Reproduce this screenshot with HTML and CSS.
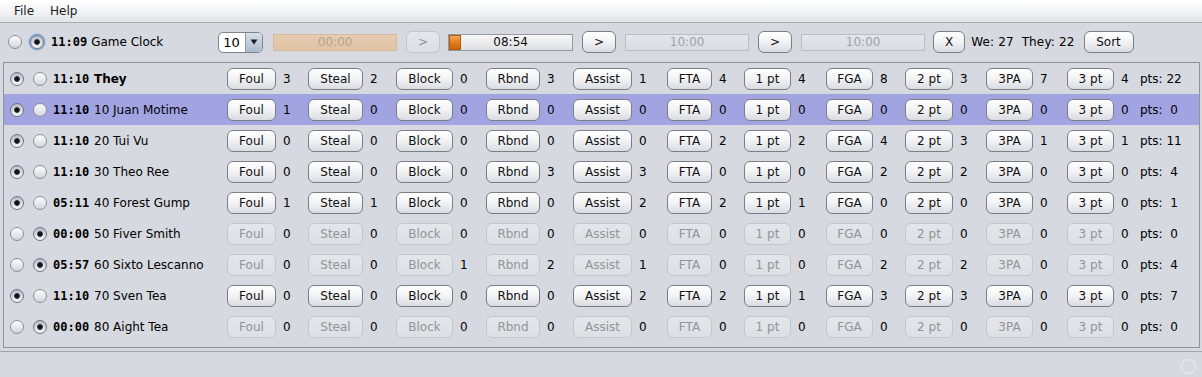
FILE: index.html
```html
<!DOCTYPE html>
<html>
<head>
<meta charset="utf-8">
<title>Game Clock</title>
<link rel="stylesheet" href="styles.css">
</head>
<body>
<div class="menubar"><span class="menu">File</span><span class="menu">Help</span></div>

<div class="toprow">
  <span class="radio r1"></span>
  <span class="radio on focus r2"></span>
  <span class="time t1">11:09</span>
  <span class="label">Game Clock</span>
  <div class="combo"><span class="combo-val">10</span><span class="combo-arrow"><svg width="8" height="6" viewBox="0 0 8 6"><path d="M0.5 0.5 L7.5 0.5 L4 5.5 Z" fill="#1a1d22"/></svg></span></div>
  <div class="pbar tan"><span>00:00</span></div>
  <button class="btn small dis">&gt;</button>
  <div class="pbar live"><i class="chunk"></i><span>08:54</span></div>
  <button class="btn small">&gt;</button>
  <div class="pbar off"><span>10:00</span></div>
  <button class="btn small">&gt;</button>
  <div class="pbar off"><span>10:00</span></div>
  <button class="btn x">X</button>
  <span class="score">We: 27  They: 22</span>
  <button class="btn sort">Sort</button>
</div>

<div class="panel">
  <div class="row">
    <span class="radio on"></span><span class="radio"></span>
    <span class="time">11:10</span><span class="name bold">They</span>
    <button class="btn">Foul</button><span class="cnt">3</span>
    <button class="btn">Steal</button><span class="cnt">2</span>
    <button class="btn">Block</button><span class="cnt">0</span>
    <button class="btn">Rbnd</button><span class="cnt">3</span>
    <button class="btn">Assist</button><span class="cnt">1</span>
    <button class="btn">FTA</button><span class="cnt">4</span>
    <button class="btn">1 pt</button><span class="cnt">4</span>
    <button class="btn">FGA</button><span class="cnt">8</span>
    <button class="btn">2 pt</button><span class="cnt">3</span>
    <button class="btn">3PA</button><span class="cnt">7</span>
    <button class="btn">3 pt</button><span class="cnt">4</span>
    <span class="pts">pts: 22</span>
  </div>
  <div class="row sel">
    <span class="radio on"></span><span class="radio"></span>
    <span class="time">11:10</span><span class="name">10 Juan Motime</span>
    <button class="btn">Foul</button><span class="cnt">1</span>
    <button class="btn">Steal</button><span class="cnt">0</span>
    <button class="btn">Block</button><span class="cnt">0</span>
    <button class="btn">Rbnd</button><span class="cnt">0</span>
    <button class="btn">Assist</button><span class="cnt">0</span>
    <button class="btn">FTA</button><span class="cnt">0</span>
    <button class="btn">1 pt</button><span class="cnt">0</span>
    <button class="btn">FGA</button><span class="cnt">0</span>
    <button class="btn">2 pt</button><span class="cnt">0</span>
    <button class="btn">3PA</button><span class="cnt">0</span>
    <button class="btn">3 pt</button><span class="cnt">0</span>
    <span class="pts">pts:  0</span>
  </div>
  <div class="row">
    <span class="radio on"></span><span class="radio"></span>
    <span class="time">11:10</span><span class="name">20 Tui Vu</span>
    <button class="btn">Foul</button><span class="cnt">0</span>
    <button class="btn">Steal</button><span class="cnt">0</span>
    <button class="btn">Block</button><span class="cnt">0</span>
    <button class="btn">Rbnd</button><span class="cnt">0</span>
    <button class="btn">Assist</button><span class="cnt">0</span>
    <button class="btn">FTA</button><span class="cnt">2</span>
    <button class="btn">1 pt</button><span class="cnt">2</span>
    <button class="btn">FGA</button><span class="cnt">4</span>
    <button class="btn">2 pt</button><span class="cnt">3</span>
    <button class="btn">3PA</button><span class="cnt">1</span>
    <button class="btn">3 pt</button><span class="cnt">1</span>
    <span class="pts">pts: 11</span>
  </div>
  <div class="row">
    <span class="radio on"></span><span class="radio"></span>
    <span class="time">11:10</span><span class="name">30 Theo Ree</span>
    <button class="btn">Foul</button><span class="cnt">0</span>
    <button class="btn">Steal</button><span class="cnt">0</span>
    <button class="btn">Block</button><span class="cnt">0</span>
    <button class="btn">Rbnd</button><span class="cnt">3</span>
    <button class="btn">Assist</button><span class="cnt">3</span>
    <button class="btn">FTA</button><span class="cnt">0</span>
    <button class="btn">1 pt</button><span class="cnt">0</span>
    <button class="btn">FGA</button><span class="cnt">2</span>
    <button class="btn">2 pt</button><span class="cnt">2</span>
    <button class="btn">3PA</button><span class="cnt">0</span>
    <button class="btn">3 pt</button><span class="cnt">0</span>
    <span class="pts">pts:  4</span>
  </div>
  <div class="row">
    <span class="radio on"></span><span class="radio"></span>
    <span class="time">05:11</span><span class="name">40 Forest Gump</span>
    <button class="btn">Foul</button><span class="cnt">1</span>
    <button class="btn">Steal</button><span class="cnt">1</span>
    <button class="btn">Block</button><span class="cnt">0</span>
    <button class="btn">Rbnd</button><span class="cnt">0</span>
    <button class="btn">Assist</button><span class="cnt">2</span>
    <button class="btn">FTA</button><span class="cnt">2</span>
    <button class="btn">1 pt</button><span class="cnt">1</span>
    <button class="btn">FGA</button><span class="cnt">0</span>
    <button class="btn">2 pt</button><span class="cnt">0</span>
    <button class="btn">3PA</button><span class="cnt">0</span>
    <button class="btn">3 pt</button><span class="cnt">0</span>
    <span class="pts">pts:  1</span>
  </div>
  <div class="row">
    <span class="radio"></span><span class="radio on"></span>
    <span class="time">00:00</span><span class="name">50 Fiver Smith</span>
    <button class="btn dis">Foul</button><span class="cnt">0</span>
    <button class="btn dis">Steal</button><span class="cnt">0</span>
    <button class="btn dis">Block</button><span class="cnt">0</span>
    <button class="btn dis">Rbnd</button><span class="cnt">0</span>
    <button class="btn dis">Assist</button><span class="cnt">0</span>
    <button class="btn dis">FTA</button><span class="cnt">0</span>
    <button class="btn dis">1 pt</button><span class="cnt">0</span>
    <button class="btn dis">FGA</button><span class="cnt">0</span>
    <button class="btn dis">2 pt</button><span class="cnt">0</span>
    <button class="btn dis">3PA</button><span class="cnt">0</span>
    <button class="btn dis">3 pt</button><span class="cnt">0</span>
    <span class="pts">pts:  0</span>
  </div>
  <div class="row">
    <span class="radio"></span><span class="radio on"></span>
    <span class="time">05:57</span><span class="name">60 Sixto Lescanno</span>
    <button class="btn dis">Foul</button><span class="cnt">0</span>
    <button class="btn dis">Steal</button><span class="cnt">0</span>
    <button class="btn dis">Block</button><span class="cnt">1</span>
    <button class="btn dis">Rbnd</button><span class="cnt">2</span>
    <button class="btn dis">Assist</button><span class="cnt">1</span>
    <button class="btn dis">FTA</button><span class="cnt">0</span>
    <button class="btn dis">1 pt</button><span class="cnt">0</span>
    <button class="btn dis">FGA</button><span class="cnt">2</span>
    <button class="btn dis">2 pt</button><span class="cnt">2</span>
    <button class="btn dis">3PA</button><span class="cnt">0</span>
    <button class="btn dis">3 pt</button><span class="cnt">0</span>
    <span class="pts">pts:  4</span>
  </div>
  <div class="row">
    <span class="radio on"></span><span class="radio"></span>
    <span class="time">11:10</span><span class="name">70 Sven Tea</span>
    <button class="btn">Foul</button><span class="cnt">0</span>
    <button class="btn">Steal</button><span class="cnt">0</span>
    <button class="btn">Block</button><span class="cnt">0</span>
    <button class="btn">Rbnd</button><span class="cnt">0</span>
    <button class="btn">Assist</button><span class="cnt">2</span>
    <button class="btn">FTA</button><span class="cnt">2</span>
    <button class="btn">1 pt</button><span class="cnt">1</span>
    <button class="btn">FGA</button><span class="cnt">3</span>
    <button class="btn">2 pt</button><span class="cnt">3</span>
    <button class="btn">3PA</button><span class="cnt">0</span>
    <button class="btn">3 pt</button><span class="cnt">0</span>
    <span class="pts">pts:  7</span>
  </div>
  <div class="row">
    <span class="radio"></span><span class="radio on"></span>
    <span class="time">00:00</span><span class="name">80 Aight Tea</span>
    <button class="btn dis">Foul</button><span class="cnt">0</span>
    <button class="btn dis">Steal</button><span class="cnt">0</span>
    <button class="btn dis">Block</button><span class="cnt">0</span>
    <button class="btn dis">Rbnd</button><span class="cnt">0</span>
    <button class="btn dis">Assist</button><span class="cnt">0</span>
    <button class="btn dis">FTA</button><span class="cnt">0</span>
    <button class="btn dis">1 pt</button><span class="cnt">0</span>
    <button class="btn dis">FGA</button><span class="cnt">0</span>
    <button class="btn dis">2 pt</button><span class="cnt">0</span>
    <button class="btn dis">3PA</button><span class="cnt">0</span>
    <button class="btn dis">3 pt</button><span class="cnt">0</span>
    <span class="pts">pts:  0</span>
  </div>
</div>

<div class="statusbar">
  <svg class="busy" width="17" height="17" viewBox="0 0 17 17"><circle cx="8.5" cy="8.5" r="7" fill="none" stroke="#e4e6ea" stroke-width="1.5"/></svg>
</div>
</body>
</html>
```

FILE: styles.css
```css
html, body {
  margin: 0;
  padding: 0;
}
body {
  width: 1202px;
  height: 377px;
  overflow: hidden;
  background: #d6d9df;
  font-family: "DejaVu Sans", sans-serif;
  font-size: 12px;
  color: #000;
}

/* menu bar */
.menubar {
  height: 22px;
  line-height: 22px;
  padding-left: 6px;
  background: linear-gradient(#ffffff, #f4f5f7 45%, #e2e4e8);
  border-bottom: 1px solid #a9acb2;
  display: flex;
}
.menu {
  padding: 0 8px;
  color: #1b1b1b;
}

/* top row */
.toprow {
  display: flex;
  align-items: center;
  height: 22px;
  padding: 8px 0 0 8px;
  margin-bottom: 9px;
}
.toprow .r2 { margin-left: 8px; }
.toprow .t1 { margin-left: 7px; }
.toprow .label { margin-left: 4px; width: 127px; }

.combo {
  width: 45px;
  height: 21px;
  box-sizing: border-box;
  border: 1px solid #7e848c;
  border-radius: 5px;
  background: #fff;
  display: flex;
  overflow: hidden;
}
.combo-val {
  flex: 1;
  padding-left: 4px;
  line-height: 19px;
  font-size: 13px;
}
.combo-arrow {
  width: 16px;
  border-left: 1px solid #8e9aa8;
  background: linear-gradient(#d9e1ea, #a9bacb);
  display: flex;
  align-items: center;
  justify-content: center;
}

.pbar {
  position: relative;
  width: 125px;
  height: 17px;
  box-sizing: border-box;
  border: 1px solid #b9bcc2;
  background: linear-gradient(#e4e6ea, #d9dce1);
  color: #9fa1a5;
  display: flex;
  align-items: center;
  justify-content: center;
  margin-left: 9px;
}
.pbar span { position: relative; line-height: 15px; }
.pbar.tan {
  margin-left: 10px;
  width: 124px;
  border-color: #d7b99b;
  background: linear-gradient(#e6ccb1, #e0c2a4);
  color: #b8a38f;
}
.pbar.live {
  margin-left: 8px;
  border-color: #959aa1;
  background: linear-gradient(#f6f6f7, #e8e9eb 60%, #dddfe2);
  color: #111;
}
.pbar.off { width: 124px; }
.chunk {
  position: absolute;
  left: 0;
  top: 0;
  bottom: 0;
  width: 12px;
  background: linear-gradient(#f7b063, #e07a14 55%, #c86207);
  box-shadow: inset 0 0 0 1px #b25a0c;
}

.btn {
  font-family: "DejaVu Sans", sans-serif;
  font-size: 12px;
  color: #111;
  height: 22px;
  padding: 0;
  box-sizing: border-box;
  border: 1px solid #7a7f86;
  border-radius: 6px;
  background: linear-gradient(#ffffff, #f3f4f6 45%, #e3e5e9 80%, #d8dbe0);
  display: flex;
  align-items: center;
  justify-content: center;
  line-height: 1;
}
.btn.dis {
  color: #929497;
  border-color: #c3c6cb;
  background: linear-gradient(#e3e6ea, #dcdfe3);
}
.btn.small { width: 34px; margin-left: 9px; }
.btn.x { width: 32px; margin-left: 8px; }
.btn.sort { width: 50px; margin-left: 9px; }
.score {
  white-space: pre;
  margin-left: 6px;
  letter-spacing: 0.15px;
}

/* radios */
.radio {
  width: 14px;
  height: 14px;
  box-sizing: border-box;
  border-radius: 50%;
  border: 1px solid #8b9097;
  background: linear-gradient(#fdfdfd, #e6e8eb 55%, #cfd3d9);
  display: inline-block;
}
.radio.on {
  border-color: #6e747c;
  background: radial-gradient(circle at 50% 50%, #0c0d0f 0, #1c1e22 2.4px, rgba(0,0,0,0) 3.2px),
              linear-gradient(#b3bac4, #dde1e6 60%, #f4f5f7);
}
.radio.focus {
  box-shadow: 0 0 0 1.5px #7ea9d9;
}

.time {
  font-family: "DejaVu Sans Mono", monospace;
  font-weight: bold;
  font-size: 12px;
}

/* table panel */
.panel {
  margin: 0 2px 0 3px;
  border: 1px solid #8f9399;
  padding-bottom: 5px;
}
.row {
  display: grid;
  grid-template-columns:
    23px 20px 41px 133px
    49px 32px 55px 33px 57px 33px 54px 33px 59px 35px 45px 32px
    47px 35px 47px 32px 48px 33px 47px 34px 47px 26px auto;
  align-items: center;
  height: 31px;
  padding-left: 6px;
}
.row.sel { background: #a2a4e2; }
.row .btn { width: 100%; }
.name.bold { font-weight: bold; }
.cnt { padding-left: 7px; }
.pts { white-space: pre; }

/* status bar */
.statusbar {
  margin-top: 3px;
  border-top: 1px solid #a3a6ac;
  height: 25px;
  display: flex;
  justify-content: flex-end;
  align-items: center;
  padding-right: 5px;
}
.busy { margin-top: 3px; }
```
